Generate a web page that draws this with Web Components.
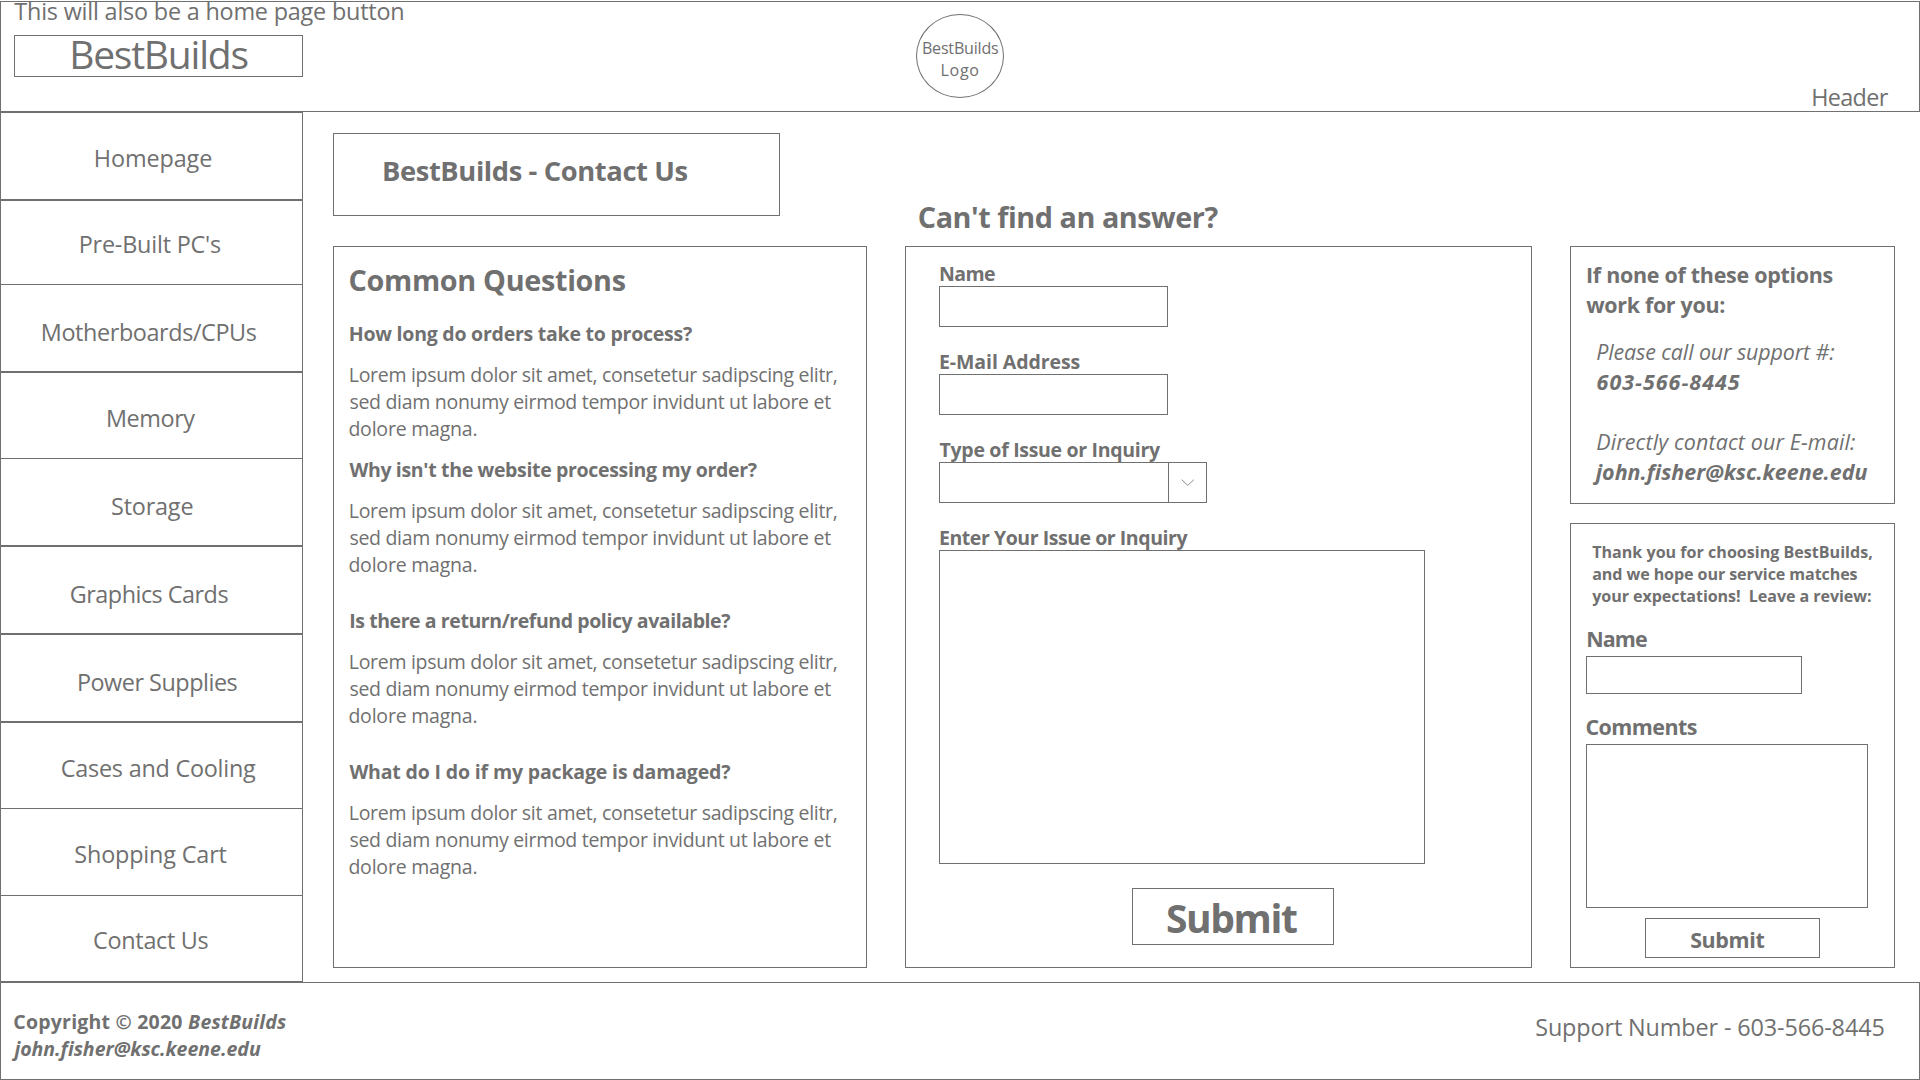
<!DOCTYPE html>
<html lang="en">
<head>
<meta charset="utf-8">
<title>BestBuilds - Contact Us</title>
<style>
html,body{margin:0;padding:0;background:#fff}
body{width:1920px;height:1080px;overflow:hidden;color:#707070;font-family:"Open Sans","Noto Sans",sans-serif}
</style>
</head>
<body>
<contact-page></contact-page>
<script>
const define = (name, html, extra) => customElements.define(name, class extends HTMLElement {
  connectedCallback() {
    if (this.shadowRoot) return;
    const root = this.attachShadow({mode: 'open'});
    const t = document.createElement('template');
    t.innerHTML = typeof html === 'function' ? html(this) : html;
    root.append(t.content.cloneNode(true));
    if (extra) extra(this, root);
  }
});

/* One line of text. base: distance from its top to the baseline (also its height);
   x: left edge of the letters; w: width of the letters, reached by tracking. */
const pen = document.createElement('canvas').getContext('2d');
define('fit-text', `<style>
  :host{display:block;white-space:pre;flex:none}
  span{display:block;white-space:pre}
</style><span></span>`, (el, root) => {
  const num = (k, d) => parseFloat(el.getAttribute(k) ?? d);
  const text = el.getAttribute('text'), size = num('size', 24) * 0.975;
  const weight = el.hasAttribute('bold') ? 700 : 400;
  const style = el.hasAttribute('italic') ? 'italic' : 'normal';
  const base = num('base', 20), up = Math.round(size * 1.069), down = Math.round(size * 0.293);
  const span = root.querySelector('span');
  span.textContent = text;
  pen.font = `${style} ${weight} ${size}px "Open Sans"`;
  const m = pen.measureText(text);
  const ink = m.actualBoundingBoxRight + m.actualBoundingBoxLeft;
  const track = (num('w', ink) - ink) / (text.length - 1);
  el.style.cssText += `height:${base}px;width:${num('w', ink)}px;margin-left:${num('x', 0)}px`;
  span.style.cssText = `font:${style} ${weight} ${size}px/${2 * base - up + down}px "Open Sans","Noto Sans",sans-serif;letter-spacing:${track}px;margin-left:${m.actualBoundingBoxLeft}px`;
});

define('line-box', `<style>
  :host{display:block;box-sizing:border-box;border:1px solid #707070;background:#fff;flex:none}
</style><slot></slot>`);

define('site-header', `<style>
  :host{display:flex;box-sizing:border-box;height:111px;border:1px solid #707070}
  .brand{width:302px}
  .brand line-box{width:289px;height:42px;margin:15px 0 0 13px}
  .logo{box-sizing:border-box;width:88px;height:84px;border:1px solid #707070;border-radius:50%;margin:12px 0 0 613px}
</style>
<div class="brand">
  <fit-text text="This will also be a home page button" x="13.3" w="389" base="18"></fit-text>
  <line-box><fit-text text="BestBuilds" size="40" x="57.2" w="175.2" base="33"></fit-text></line-box>
</div>
<div class="logo">
  <fit-text text="BestBuilds" size="16.5" x="5.9" w="75.2" base="39"></fit-text>
  <fit-text text="Logo" size="16.5" x="24.5" w="36.8" base="22"></fit-text>
</div>
<fit-text text="Header" x="809.2" w="75.5" base="104"></fit-text>`);

define('nav-item', el => `<style>
  :host{display:block;box-sizing:border-box;height:${el.getAttribute('h')}px;border:1px solid #707070;padding-left:.6px;${el.hasAttribute('joined') ? 'border-top:0' : ''}}
</style><fit-text text="${el.getAttribute('label')}" x="${el.getAttribute('x')}" w="${el.getAttribute('w')}" base="${el.getAttribute('base')}"></fit-text>`);

define('side-nav', `<style>:host{display:flex;flex-direction:column;width:303px;flex:none}</style>
<nav-item label="Homepage" h="88" x="94.2" w="115.4" base="54"></nav-item>
<nav-item label="Pre-Built PC's" h="85" x="79.1" w="140.3" base="52"></nav-item>
<nav-item label="Motherboards/CPUs" h="87" joined x="41.2" w="214" base="56"></nav-item>
<nav-item label="Memory" h="87" x="106.4" w="87.3" base="54"></nav-item>
<nav-item label="Storage" h="87" joined x="110.4" w="80.4" base="56"></nav-item>
<nav-item label="Graphics Cards" h="88" x="69.2" w="157.6" base="56"></nav-item>
<nav-item label="Power Supplies" h="88" x="77.3" w="158.7" base="56"></nav-item>
<nav-item label="Cases and Cooling" h="87" x="60.2" w="194.3" base="54"></nav-item>
<nav-item label="Shopping Cart" h="87" joined x="73.7" w="151.3" base="54"></nav-item>
<nav-item label="Contact Us" h="86" joined x="92.5" w="114.5" base="53"></nav-item>`);

define('faq-item', el => `<style>:host{display:block}</style>
<fit-text bold size="20" text="${el.getAttribute('question')}" x="${el.getAttribute('x') || 15.4}" w="${el.getAttribute('w')}" base="${el.getAttribute('base')}"></fit-text>
<fit-text size="20" text="Lorem ipsum dolor sit amet, consetetur sadipscing elitr," x="15.8" w="486.9" base="41"></fit-text>
<fit-text size="20" text="sed diam nonumy eirmod tempor invidunt ut labore et" x="15.4" w="481.8" base="27"></fit-text>
<fit-text size="20" text="dolore magna." x="15.4" w="127.1" base="27"></fit-text>`);

define('form-field', el => `<style>
  :host{display:block}
  .box{display:flex;justify-content:flex-end;box-sizing:border-box;width:${el.getAttribute('w')}px;height:${el.getAttribute('h')}px;margin-top:${el.getAttribute('gap') || 5}px;border:1px solid #707070;background:#fff}
  .arrow{box-sizing:border-box;width:38px;height:40px;border-left:1px solid #707070}
  svg{display:block;margin:16px 0 0 12px}
</style>
<fit-text bold size="${el.getAttribute('size') || 20}" text="${el.getAttribute('label')}" x="${el.getAttribute('tx') || 1}" w="${el.getAttribute('tw')}" base="${el.getAttribute('base')}"></fit-text>
<div class="box">${el.hasAttribute('select') ? `<div class="arrow"><svg width="14" height="8" viewBox="0 0 14 8" fill="none" stroke="#707070" stroke-width=".8"><path d="M.7.7 6.8 6.4 12.9.7"/></svg></div>` : ''}</div>`);

define('support-card', `<style>:host{display:block}line-box{height:258px}</style>
<line-box>
  <fit-text bold size="22" text="If none of these options" x="16" w="245.6" base="36"></fit-text>
  <fit-text bold size="22" text="work for you:" x="15.2" w="138" base="30"></fit-text>
  <fit-text italic size="22" text="Please call our support #:" x="25.2" w="238" base="47"></fit-text>
  <fit-text bold italic size="22" text="603-566-8445" x="25.6" w="143.2" base="30"></fit-text>
  <fit-text italic size="22" text="Directly contact our E-mail:" x="25.2" w="258.8" base="60"></fit-text>
  <fit-text bold italic size="22" text="john.fisher@ksc.keene.edu" x="21.7" w="274.8" base="30"></fit-text>
</line-box>`);

define('review-card', `<style>
  :host{display:block}
  .card{height:445px}
  form-field{margin-left:15px}
  .submit{width:175px;height:40px;margin:10px 0 0 74px}
</style>
<line-box class="card">
  <fit-text bold size="16.5" text="Thank you for choosing BestBuilds," x="21.2" w="280" base="34"></fit-text>
  <fit-text bold size="16.5" text="and we hope our service matches" x="21.2" w="265.4" base="22"></fit-text>
  <fit-text bold size="16.5" text="your expectations!  Leave a review:" x="21.2" w="278.8" base="22"></fit-text>
  <form-field label="Name" size="22" tx="1.3" tw="59.7" base="45" gap="9" w="216" h="38"></form-field>
  <form-field label="Comments" size="22" tx=".5" tw="110.2" base="41" gap="9" w="282" h="164"></form-field>
  <line-box class="submit"><fit-text bold size="22" text="Submit" x="44.2" w="74.2" base="29"></fit-text></line-box>
</line-box>`);

define('site-footer', `<style>
  :host{display:flex;box-sizing:border-box;height:98px;border:1px solid #707070}
  .left{width:1400px}
  .row{display:flex}
</style>
<div class="left">
  <div class="row">
    <fit-text bold size="20" text="Copyright © 2020" x="13.3" w="168" base="46"></fit-text>
    <fit-text bold italic size="20" text="BestBuilds" x="5.8" w="98" base="46"></fit-text>
  </div>
  <fit-text bold italic size="20" text="john.fisher@ksc.keene.edu" x="10.4" w="249.5" base="27"></fit-text>
</div>
<fit-text text="Support Number - 603-566-8445" x="135.2" w="348.2" base="53"></fit-text>`);

define('contact-page', `<style>
  :host{display:flex;flex-direction:column;box-sizing:border-box;width:1920px;height:1080px;padding-top:1px}
  main{display:flex;height:870px}
  .cols{display:flex;gap:38px;margin-left:30px}
  .faq{width:534px;padding-top:21px}
  .title{width:447px;height:83px;margin-bottom:30px}
  .panel{height:722px}
  .ask{width:627px}
  .ask .panel{margin-top:18px}
  .ask form-field{margin-left:33px}
  .submit{width:202px;height:57px;margin:24px 0 0 226px}
  .side{display:flex;flex-direction:column;gap:19px;width:325px;padding-top:134px}
</style>
<site-header></site-header>
<main>
  <side-nav></side-nav>
  <div class="cols">
    <section class="faq">
      <line-box class="title"><fit-text bold size="28" text="BestBuilds - Contact Us" x="50" w="303.5" base="47"></fit-text></line-box>
      <line-box class="panel">
        <fit-text bold size="29.5" text="Common Questions" x="15.5" w="276.2" base="44"></fit-text>
        <faq-item question="How long do orders take to process?" x="15.8" w="342.2" base="50"></faq-item>
        <faq-item question="Why isn't the website processing my order?" w="407.3" base="41"></faq-item>
        <faq-item question="Is there a return/refund policy available?" x="16.2" w="380" base="56"></faq-item>
        <faq-item question="What do I do if my package is damaged?" w="380.8" base="56"></faq-item>
      </line-box>
    </section>
    <section class="ask">
      <fit-text bold size="29.5" text="Can't find an answer?" x="13.8" w="299.6" base="116"></fit-text>
      <line-box class="panel">
        <form-field label="Name" tw="54.9" base="34" w="229" h="41"></form-field>
        <form-field label="E-Mail Address" tw="139.6" base="42" w="229" h="41"></form-field>
        <form-field label="Type of Issue or Inquiry" tx=".6" tw="221.4" base="42" w="268" h="41" select></form-field>
        <form-field label="Enter Your Issue or Inquiry" tw="248.4" base="42" w="486" h="314"></form-field>
        <line-box class="submit"><fit-text bold size="40" text="Submit" x="34" w="130" base="44"></fit-text></line-box>
      </line-box>
    </section>
    <section class="side">
      <support-card></support-card>
      <review-card></review-card>
    </section>
  </div>
</main>
<site-footer></site-footer>`);
</script>
</body>
</html>
